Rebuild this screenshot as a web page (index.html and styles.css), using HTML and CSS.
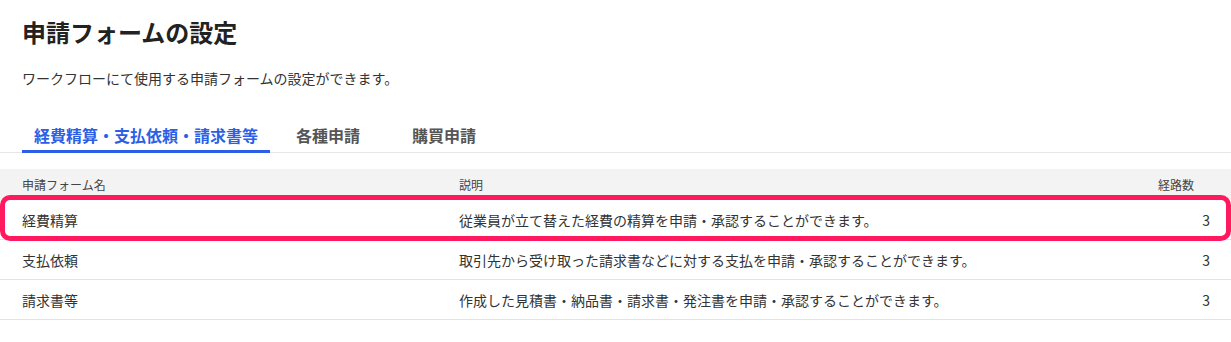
FILE: index.html
```html
<!DOCTYPE html>
<html lang="ja">
<head>
<meta charset="utf-8">
<title>申請フォームの設定</title>
<link rel="stylesheet" href="styles.css">
</head>
<body>
<main class="page">
  <header class="intro">
    <h1 class="title">申請フォームの設定</h1>
    <p class="lead">ワークフローにて使用する申請フォームの設定ができます。</p>
  </header>
  <nav class="tabs">
    <a class="tab tab-active">経費精算・支払依頼・請求書等</a>
    <a class="tab">各種申請</a>
    <a class="tab">購買申請</a>
  </nav>
  <section class="table">
    <div class="row row-head">
      <div class="cell">申請フォーム名</div>
      <div class="cell">説明</div>
      <div class="cell cell-num">経路数</div>
    </div>
    <div class="row row-highlight">
      <div class="cell">経費精算</div>
      <div class="cell">従業員が立て替えた経費の精算を申請・承認することができます。</div>
      <div class="cell cell-num">3</div>
    </div>
    <div class="row">
      <div class="cell">支払依頼</div>
      <div class="cell">取引先から受け取った請求書などに対する支払を申請・承認することができます。</div>
      <div class="cell cell-num">3</div>
    </div>
    <div class="row">
      <div class="cell">請求書等</div>
      <div class="cell">作成した見積書・納品書・請求書・発注書を申請・承認することができます。</div>
      <div class="cell cell-num">3</div>
    </div>
  </section>
</main>
</body>
</html>
```

FILE: styles.css
```css
* { box-sizing: border-box; }
html, body { margin: 0; padding: 0; background: #fff; }
body {
  font-family: "Noto Sans CJK JP", "Noto Sans", sans-serif;
  color: #333;
  width: 1231px;
}
.intro { padding: 16px 22px 0; }
.title {
  margin: 0;
  font-size: 24px;
  line-height: 32px;
  font-weight: 700;
  color: #222;
}
.lead {
  margin: 20px 0 0;
  font-size: 14px;
  line-height: 20px;
  color: #333;
}
.tabs {
  display: flex;
  margin-top: 32px;
  padding: 0 22px;
  border-bottom: 1px solid #e6e6e6;
}
.tab {
  display: block;
  min-width: 116px;
  padding: 3px 12px;
  margin-bottom: -1px;
  text-align: center;
  font-size: 16px;
  line-height: 24px;
  font-weight: 700;
  color: #555;
  border-bottom: 3px solid transparent;
}
.tab-active {
  color: #2d5fe6;
  border-bottom-color: #2d5fe6;
}
.table { margin-top: 16px; }
.row {
  display: grid;
  grid-template-columns: 437px 1fr 120px;
  align-items: center;
  height: 40px;
  border-bottom: 1px solid #e3e3e3;
  font-size: 14px;
  position: relative;
}
.row-head {
  height: 31px;
  background: #f4f3f4;
  border-bottom: none;
  font-size: 12px;
  color: #444;
}
.cell { padding: 0 22px; white-space: nowrap; }
.cell-num { text-align: right; padding-right: 21px; }
.row-head .cell-num { padding-right: 37px; }
.row-highlight::after {
  content: "";
  position: absolute;
  top: -5px;
  bottom: -2px;
  left: 0;
  right: 0;
  border: 5px solid #ff1a5f;
  border-radius: 10px;
  pointer-events: none;
}
```
